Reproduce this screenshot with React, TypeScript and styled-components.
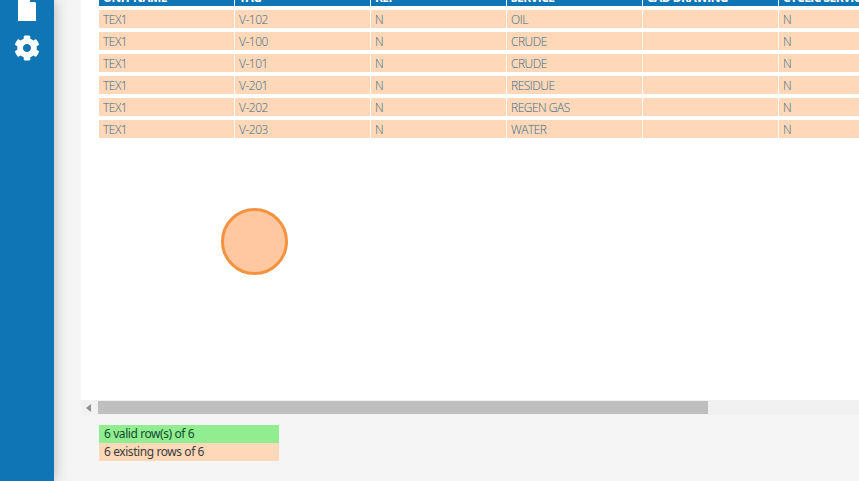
import React from "react";
import styled, { createGlobalStyle } from "styled-components";
import { FaCog } from "react-icons/fa";

const Global = createGlobalStyle`
  html, body { margin: 0; padding: 0; height: 100%; overflow: hidden; }
  #root { height: 100%; }
  body { font-family: "Open Sans", "Noto Sans", sans-serif; background: #f5f5f5; }
`;

const Page = styled.div`
  display: flex;
  width: 859px;
  height: 481px;
  overflow: hidden;
`;

const Sidebar = styled.nav`
  flex: 0 0 54px;
  background: #0f75b5;
  box-shadow: 0 0 14px rgba(0, 0, 0, 0.28);
  display: flex;
  flex-direction: column;
  align-items: center;
  gap: 14px;
  color: #fff;
  z-index: 1;
`;

const DocIcon = styled.svg`
  display: block;
  width: 18px;
  height: 21px;
`;

const Gear = styled(FaCog)`
  width: 26px;
  height: 26px;
`;

const Main = styled.main`
  flex: 1;
  min-width: 0;
  padding-left: 27px;
  display: flex;
  flex-direction: column;
`;

const Panel = styled.section`
  position: relative;
  height: 400px;
  background: #fff;
  overflow: hidden;
  padding-left: 17px;
`;

const Table = styled.table`
  table-layout: fixed;
  width: 816px;
  margin-top: -13px;
  border-collapse: separate;
  border-spacing: 0 4px;
  font-size: 12px;
`;

const Th = styled.th`
  height: 15px;
  padding: 0 4px 2px;
  box-sizing: border-box;
  background: #0f75b5;
  color: #fff;
  font-weight: 700;
  font-size: 12px;
  letter-spacing: -0.55px;
  line-height: 13px;
  text-align: left;
  white-space: nowrap;
  overflow: hidden;
  border-left: 1px solid #fff;
`;

const Td = styled.td`
  height: 18px;
  padding: 1px 4px 0;
  box-sizing: border-box;
  background: #fed8b9;
  color: #3c6a84;
  font-weight: 300;
  font-size: 12px;
  letter-spacing: -0.5px;
  line-height: 17px;
  white-space: nowrap;
  overflow: hidden;
  border-left: 1px solid #fff;
`;

const ClickMark = styled.div`
  position: absolute;
  left: 140px;
  top: 208px;
  width: 67px;
  height: 67px;
  box-sizing: border-box;
  border-radius: 50%;
  border: 3px solid #f4933f;
  background: #ffc8a0;
`;

const Scrollbar = styled.div`
  flex: 0 0 15px;
  display: flex;
  align-items: center;
  background: #f1f1f1;
`;

const Arrow = styled.span`
  width: 0;
  height: 0;
  margin: 0 7px 0 5px;
  border-style: solid;
  border-width: 4px 5px 4px 0;
  border-color: transparent #8f8f8f transparent transparent;
`;

const Thumb = styled.div`
  width: 610px;
  height: 13px;
  background: #bfbfbf;
`;

const Status = styled.div`
  margin: 10px 0 0 18px;
  width: 180px;
  font-family: "Noto Sans", sans-serif;
`;

const StatusLine = styled.div<{ $tone: "ok" | "info" }>`
  height: 18px;
  line-height: 18px;
  padding-left: 5px;
  font-size: 12px;
  letter-spacing: -0.42px;
  color: ${(p) => (p.$tone === "ok" ? "#144a30" : "#3c3c3a")};
  background: ${(p) => (p.$tone === "ok" ? "#90ee90" : "#fed8b9")};
`;

const columns = ["UNIT NAME", "TAG", "REF", "SERVICE", "CAD DRAWING", "CYCLIC SERVICE"];
const rows = [
  ["V-102", "OIL"],
  ["V-100", "CRUDE"],
  ["V-101", "CRUDE"],
  ["V-201", "RESIDUE"],
  ["V-202", "REGEN GAS"],
  ["V-203", "WATER"],
];

export default function App() {
  return (
    <Page>
      <Global />
      <Sidebar>
        <DocIcon viewBox="0 0 18 21" aria-hidden="true">
          <path fill="#fff" d="M0 0H18V21H0Z" />
          <path fill="#0f75b5" d="M11 -1H18V2.5H11Z" />
          <path fill="#fff" d="M11 0H12V2H17V3H11Z" />
        </DocIcon>
        <Gear />
      </Sidebar>
      <Main>
        <Panel>
          <Table>
            <thead>
              <tr>
                {columns.map((c) => (
                  <Th key={c}>{c}</Th>
                ))}
              </tr>
            </thead>
            <tbody>
              {rows.map(([tag, service]) => (
                <tr key={tag}>
                  <Td>TEX1</Td>
                  <Td>{tag}</Td>
                  <Td>N</Td>
                  <Td>{service}</Td>
                  <Td />
                  <Td>N</Td>
                </tr>
              ))}
            </tbody>
          </Table>
          <ClickMark />
        </Panel>
        <Scrollbar>
          <Arrow />
          <Thumb />
        </Scrollbar>
        <Status>
          <StatusLine $tone="ok">6 valid row(s) of 6</StatusLine>
          <StatusLine $tone="info">6 existing rows of 6</StatusLine>
        </Status>
      </Main>
    </Page>
  );
}
